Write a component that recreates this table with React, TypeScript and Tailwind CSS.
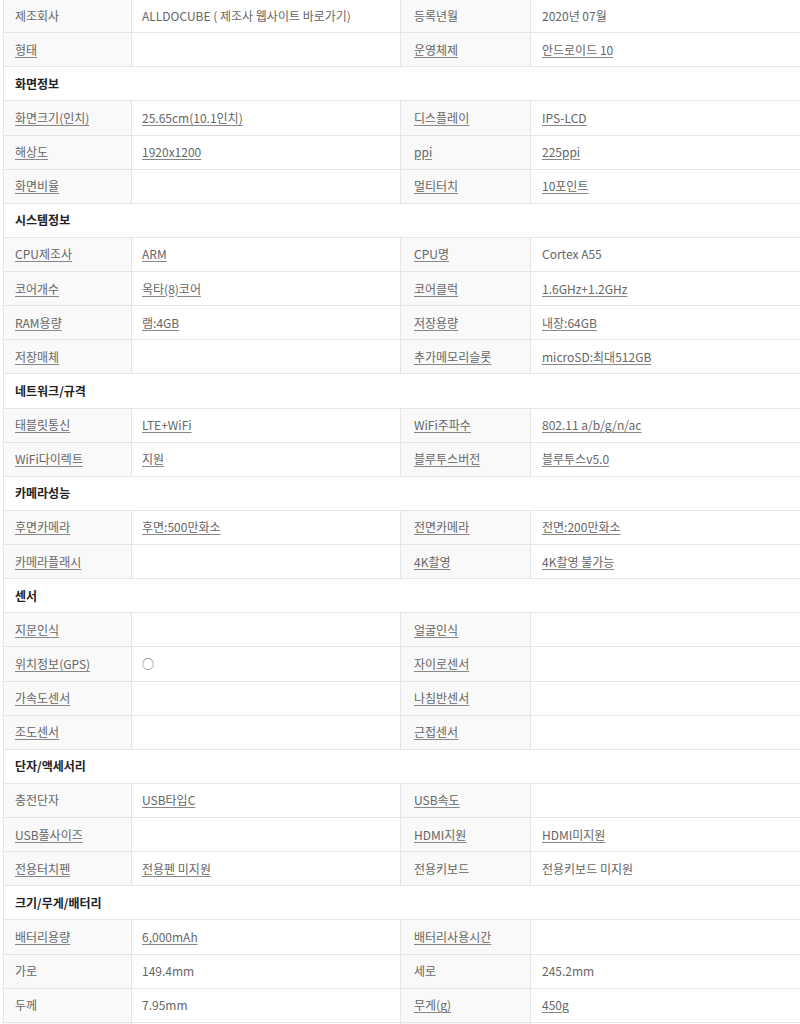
type Cell = { t: string; u?: boolean }
type Row = { head: string } | { cells: [Cell, Cell, Cell, Cell] }

const c = (t: string, u = true): Cell => ({ t, u })

const rows: Row[] = [
  { cells: [c('제조회사', false), c('ALLDOCUBE ( 제조사 웹사이트 바로가기)', false), c('등록년월', false), c('2020년 07월', false)] },
  { cells: [c('형태'), c(''), c('운영체제'), c('안드로이드 10')] },
  { head: '화면정보' },
  { cells: [c('화면크기(인치)'), c('25.65cm(10.1인치)'), c('디스플레이'), c('IPS-LCD')] },
  { cells: [c('해상도'), c('1920x1200'), c('ppi'), c('225ppi')] },
  { cells: [c('화면비율'), c(''), c('멀티터치'), c('10포인트')] },
  { head: '시스템정보' },
  { cells: [c('CPU제조사'), c('ARM'), c('CPU명'), c('Cortex A55', false)] },
  { cells: [c('코어개수'), c('옥타(8)코어'), c('코어클럭'), c('1.6GHz+1.2GHz')] },
  { cells: [c('RAM용량'), c('램:4GB'), c('저장용량'), c('내장:64GB')] },
  { cells: [c('저장매체'), c(''), c('추가메모리슬롯'), c('microSD:최대512GB')] },
  { head: '네트워크/규격' },
  { cells: [c('태블릿통신'), c('LTE+WiFi'), c('WiFi주파수'), c('802.11 a/b/g/n/ac')] },
  { cells: [c('WiFi다이렉트'), c('지원'), c('블루투스버전'), c('블루투스v5.0')] },
  { head: '카메라성능' },
  { cells: [c('후면카메라'), c('후면:500만화소'), c('전면카메라'), c('전면:200만화소')] },
  { cells: [c('카메라플래시'), c(''), c('4K촬영'), c('4K촬영 불가능')] },
  { head: '센서' },
  { cells: [c('지문인식'), c(''), c('얼굴인식'), c('')] },
  { cells: [c('위치정보(GPS)'), c('○', false), c('자이로센서'), c('')] },
  { cells: [c('가속도센서'), c(''), c('나침반센서'), c('')] },
  { cells: [c('조도센서'), c(''), c('근접센서'), c('')] },
  { head: '단자/액세서리' },
  { cells: [c('충전단자', false), c('USB타입C'), c('USB속도'), c('')] },
  { cells: [c('USB풀사이즈'), c(''), c('HDMI지원'), c('HDMI미지원')] },
  { cells: [c('전용터치펜'), c('전용펜 미지원'), c('전용키보드', false), c('전용키보드 미지원', false)] },
  { head: '크기/무게/배터리' },
  { cells: [c('배터리용량'), c('6,000mAh'), c('배터리사용시간'), c('')] },
  { cells: [c('가로', false), c('149.4mm', false), c('세로', false), c('245.2mm', false)] },
  { cells: [c('두께', false), c('7.95mm', false), c('무게(g)'), c('450g')] },
  { cells: [c(''), c(''), c(''), c('')] },
]

function Text({ cell }: { cell: Cell }) {
  if (!cell.t) return null
  return <span className={cell.u ? 'underline underline-offset-2 decoration-[#888]' : ''}>{cell.t}</span>
}

export default function App() {
  return (
    <div className="w-[800px] h-[1024px] overflow-hidden bg-white" style={{ fontFamily: '"Noto Sans CJK KR", sans-serif' }}>
      <div className="-mt-[2px] ml-[3px] w-[900px] border-l border-[#e5e5e5] text-[12px] text-[#666]">
        {rows.map((r, i) =>
          'head' in r ? (
            <div key={i} className="h-[34.125px] border-t border-[#e5e5e5] flex items-center pl-[11px] font-bold text-[#222]">
              {r.head}
            </div>
          ) : (
            <div key={i} className="h-[34.125px] border-t border-[#e5e5e5] flex whitespace-nowrap">
              <div className="w-[128px] shrink-0 flex items-center pl-[11px] bg-[#f9f9f9] border-r border-[#e5e5e5]">
                <Text cell={r.cells[0]} />
              </div>
              <div className="w-[269px] shrink-0 flex items-center pl-[10px] border-r border-[#e5e5e5]">
                <Text cell={r.cells[1]} />
              </div>
              <div className="w-[130px] shrink-0 flex items-center pl-[13px] bg-[#f9f9f9] border-r border-[#e5e5e5]">
                <Text cell={r.cells[2]} />
              </div>
              <div className="flex-1 flex items-center pl-[11px]">
                <Text cell={r.cells[3]} />
              </div>
            </div>
          )
        )}
      </div>
    </div>
  )
}
